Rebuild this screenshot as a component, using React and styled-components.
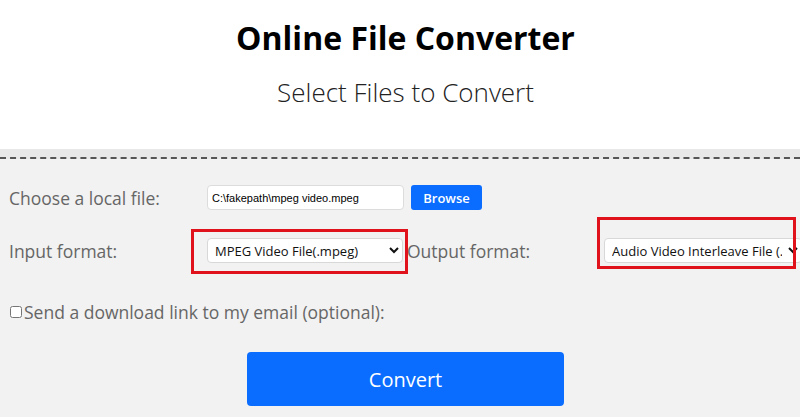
import React from "react";
import styled, { createGlobalStyle } from "styled-components";

const GlobalStyle = createGlobalStyle`
  html, body {
    margin: 0;
    padding: 0;
    background: #f2f2f2;
    font-family: "Open Sans", "Liberation Sans", sans-serif;
  }
`;

export default function App() {
  return (
    <>
      <GlobalStyle />
      <Page>
        <Header>
          <Title>Online File Converter</Title>
          <Subtitle>Select Files to Convert</Subtitle>
        </Header>
        <Band />
        <Form>
          <Row>
            <Label width="198px">Choose a local file:</Label>
            <FileBox type="text" value="C:\fakepath\mpeg video.mpeg" readOnly />
            <Browse>Browse</Browse>
          </Row>
          <Row>
            <Label width="198px">Input format:</Label>
            <Marked>
              <Select defaultValue="mpeg" width="196px">
                <option value="mpeg">MPEG Video File(.mpeg)</option>
              </Select>
              <RedBox top="-9px" left="-16px" right="-5px" bottom="-11px" />
            </Marked>
            <Label width="197px" gap="4px">Output format:</Label>
            <Marked>
              <Select defaultValue="avi" width="198px">
                <option value="avi">Audio Video Interleave File (.avi)</option>
              </Select>
              <RedBox top="-21px" left="-7px" right="6px" bottom="-6px" />
            </Marked>
          </Row>
          <CheckRow>
            <input type="checkbox" />
            <span>Send a download link to my email (optional):</span>
          </CheckRow>
          <Actions>
            <Convert>Convert</Convert>
          </Actions>
        </Form>
      </Page>
    </>
  );
}

const Page = styled.div`
  width: 800px;
  height: 417px;
  overflow: hidden;
  display: flex;
  flex-direction: column;
`;

const Header = styled.div`
  background: #ffffff;
  height: 149px;
  padding-left: 11px;
  display: flex;
  flex-direction: column;
  align-items: center;
`;

const Title = styled.h1`
  margin: 14px 0 0;
  font-size: 32px;
  font-weight: 700;
  color: #000000;
  line-height: 48px;
`;

const Subtitle = styled.h2`
  margin: 12px 0 0;
  font-size: 26px;
  font-weight: 300;
  color: #222222;
  line-height: 36px;
`;

const Band = styled.div`
  height: 8px;
  background: #e8e8e8;
  border-bottom: 2px dashed #555555;
`;

const Form = styled.div`
  flex: 1;
  background: #f2f2f2;
  padding: 26px 0 0 9px;
  display: flex;
  flex-direction: column;
`;

const Row = styled.div`
  display: flex;
  align-items: center;
  height: 25px;
  margin-bottom: 28px;
  white-space: nowrap;
`;

const Label = styled.label`
  width: ${(p) => p.width};
  margin-left: ${(p) => p.gap || "0"};
  flex-shrink: 0;
  font-size: 17.5px;
  color: #666666;
`;

const FileBox = styled.input`
  box-sizing: border-box;
  width: 197px;
  height: 25px;
  border: 1px solid #dcdcdc;
  border-radius: 4px;
  background: #ffffff;
  padding: 0 4px;
  font-family: "Liberation Sans", Arial, sans-serif;
  font-size: 11px;
  color: #000000;
  outline: none;
`;

const Browse = styled.button`
  margin-left: 7px;
  width: 71px;
  height: 25px;
  border: none;
  border-radius: 3px;
  background: #0a6dff;
  color: #ffffff;
  font-family: "Open Sans", sans-serif;
  font-size: 13px;
  font-weight: 600;
`;

const Marked = styled.div`
  position: relative;
  flex-shrink: 0;
`;

const Select = styled.select`
  box-sizing: border-box;
  width: ${(p) => p.width};
  height: 25px;
  border: 1px solid #d8d8d8;
  border-radius: 4px;
  background: #ffffff;
  padding: 0 3px;
  font-family: "Open Sans", sans-serif;
  font-size: 13px;
  color: #111111;
  display: block;
`;

const RedBox = styled.div`
  position: absolute;
  top: ${(p) => p.top};
  left: ${(p) => p.left};
  right: ${(p) => p.right};
  bottom: ${(p) => p.bottom};
  border: 3px solid #e0131d;
  pointer-events: none;
`;

const CheckRow = styled.label`
  display: flex;
  align-items: center;
  font-size: 17.5px;
  color: #666666;
  margin-top: 9px;

  input {
    margin: 0 2px 0 1px;
    width: 12px;
    height: 12px;
  }
`;

const Actions = styled.div`
  display: flex;
  justify-content: center;
  margin-top: 28px;
  padding-left: 2px;
`;

const Convert = styled.button`
  width: 317px;
  height: 54px;
  border: none;
  border-radius: 4px;
  background: #0a6dff;
  color: #ffffff;
  font-family: "Open Sans", sans-serif;
  font-size: 20px;
`;
